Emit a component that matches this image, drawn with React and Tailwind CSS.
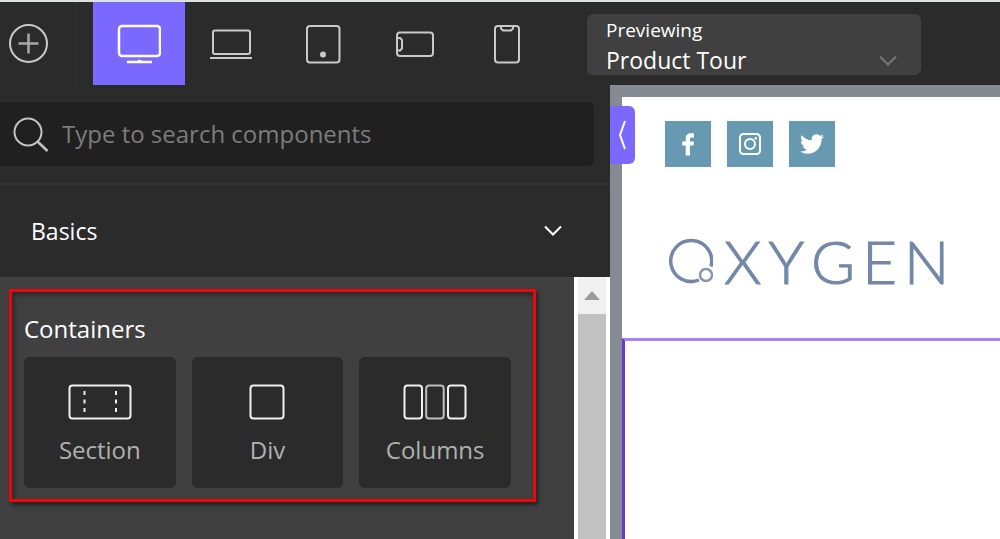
import { useState } from "react";

const devices = [
  { id: "desktop", label: "Desktop", Icon: DesktopIcon },
  { id: "laptop", label: "Laptop", Icon: LaptopIcon },
  { id: "tablet", label: "Tablet", Icon: TabletIcon },
  { id: "landscape", label: "Phone landscape", Icon: LandscapeIcon },
  { id: "phone", label: "Phone portrait", Icon: PhoneIcon },
];

const containers = [
  { name: "Section", Icon: SectionIcon },
  { name: "Div", Icon: DivIcon },
  { name: "Columns", Icon: ColumnsIcon },
];

const socials = [
  { name: "Facebook", Icon: FacebookIcon },
  { name: "Instagram", Icon: InstagramIcon },
  { name: "Twitter", Icon: TwitterIcon },
];

function Svg({ w = 44, h = 44, children, className = "" }) {
  return (
    <svg width={w} height={h} viewBox={`0 0 ${w} ${h}`} fill="none" stroke="currentColor"
      strokeWidth="2" aria-hidden="true" className={className}>
      {children}
    </svg>
  );
}

function DesktopIcon() {
  return (
    <Svg>
      <rect x="2" y="4" width="41" height="30" rx="3" strokeWidth="2.500" />
      <path d="M10 40h25" strokeWidth="2.500" />
      <path d="M19 39.500l3.500-2 3.500 2z" fill="currentColor" stroke="none" />
    </Svg>
  );
}

function LaptopIcon() {
  return (
    <Svg>
      <rect x="4" y="8.500" width="37" height="23.500" rx="2" />
      <path d="M1 36h42" />
    </Svg>
  );
}

function TabletIcon() {
  return (
    <Svg>
      <rect x="6" y="4" width="32.500" height="36.500" rx="3" />
      <circle cx="22" cy="32.500" r="3" fill="currentColor" stroke="none" />
    </Svg>
  );
}

function LandscapeIcon() {
  return (
    <Svg>
      <rect x="4" y="10.500" width="36" height="23.500" rx="3" />
      <path d="M4 16h3l2 2v8.500l-2 2H4" />
    </Svg>
  );
}

function PhoneIcon() {
  return (
    <Svg>
      <rect x="10" y="4" width="24" height="36.500" rx="3" />
      <path d="M16 4v2.500l2 2h8l2-2V4" />
    </Svg>
  );
}

function SectionIcon() {
  return (
    <Svg w={64} h={36}>
      <rect x="1.500" y="1.500" width="61" height="33" rx="3" />
      <path d="M16.500 7v24M48 7v24" strokeDasharray="4 4.500" />
    </Svg>
  );
}

function DivIcon() {
  return (
    <Svg w={36} h={36}>
      <rect x="1.500" y="1.500" width="33" height="33" rx="3" />
    </Svg>
  );
}

function ColumnsIcon() {
  return (
    <Svg w={64} h={36}>
      <rect x="1.500" y="1.500" width="17.500" height="33" rx="3" />
      <rect x="23.200" y="1.500" width="17.500" height="33" rx="3" opacity="0.75" />
      <rect x="45" y="1.500" width="17.500" height="33" rx="3" />
    </Svg>
  );
}

function FacebookIcon() {
  return (
    <svg width="24" height="24" viewBox="0 0 24 24" fill="currentColor" aria-hidden="true">
      <path d="M18 1.500v4h-2.300c-1.400 0-1.700.7-1.700 1.800V9.500h4l-.6 4H14V23.500H9.700V13.500H6.200v-4h3.500V6.400C9.700 3 11.800 1.200 14.900 1.200c1.400 0 2.700.1 3.100.3z" />
    </svg>
  );
}

function InstagramIcon() {
  return (
    <svg width="24" height="24" viewBox="0 0 24 24" fill="none" stroke="currentColor"
      strokeWidth="2" aria-hidden="true">
      <rect x="2" y="2" width="20" height="20" rx="3.500" />
      <circle cx="12" cy="12" r="5" />
      <circle cx="17.800" cy="6.200" r="1.300" fill="currentColor" stroke="none" />
    </svg>
  );
}

function TwitterIcon() {
  return (
    <svg width="24" height="24" viewBox="0 0 24 24" fill="currentColor" aria-hidden="true">
      <path d="M23.950 4.570a10 10 0 0 1-2.820.77 4.960 4.960 0 0 0 2.160-2.720c-.95.550-2 .95-3.130 1.180a4.920 4.920 0 0 0-8.380 4.480C7.690 8.100 4.070 6.130 1.640 3.160a4.820 4.820 0 0 0-.67 2.480c0 1.710.87 3.210 2.190 4.100a4.900 4.900 0 0 1-2.230-.62v.06a4.920 4.920 0 0 0 3.950 4.830 5 5 0 0 1-2.210.08 4.940 4.940 0 0 0 4.600 3.420A9.870 9.870 0 0 1 0 19.540a13.990 13.990 0 0 0 7.550 2.210c9.050 0 14-7.500 14-13.980 0-.21 0-.42-.02-.63a9.940 9.940 0 0 0 2.460-2.550z" />
    </svg>
  );
}

function Toolbar() {
  const [device, setDevice] = useState("desktop");

  return (
    <header className="flex items-stretch h-[85px] shrink-0 border-t-2 border-[#dde1e2] bg-[#2b2b2b] text-[#c9c9c9]">
      <button aria-label="Add" className="w-[77px] pl-2 border-r border-[#353535]">
        <Svg w={42} h={42}>
          <circle cx="20.500" cy="20.500" r="18.500" />
          <path d="M20.500 10.500v20M10.500 20.500h20" strokeWidth="2.500" stroke="#a8a8a8" />
        </Svg>
      </button>

      <div className="flex ml-4">
        {devices.map(({ id, label, Icon }) => (
          <button
            key={id}
            aria-label={label}
            aria-pressed={device === id}
            onClick={() => setDevice(id)}
            className={`w-[92px] flex items-center justify-center
              ${device === id ? "bg-[#7b68ff] text-white" : "hover:text-white"}`}
          >
            <Icon />
          </button>
        ))}
      </div>

      <div className="relative self-start mt-3 ml-[34px] w-[334px] h-[61px] rounded-md bg-[#404040] text-white">
        <label htmlFor="preview" className="block pl-[19px] pt-1 text-[19px] leading-6">Previewing</label>
        <select id="preview"
          className="block w-full h-9 pl-[19px] pr-12 bg-transparent appearance-none outline-none text-[23px] leading-9">
          <option>Product Tour</option>
        </select>
        <Svg w={18} h={12} className="absolute right-6 bottom-2 pointer-events-none text-[#757575]">
          <path d="M1 1.500l8 8 8-8" />
        </Svg>
      </div>
    </header>
  );
}

function Sidebar() {
  const [search, setSearch] = useState("");
  const [open, setOpen] = useState(true);

  return (
    <aside className="w-[61%] shrink-0 flex flex-col bg-[#2b2b2b]">
      {/* Search */}
      <div className="flex items-center my-[17px] mr-4 h-16 pl-3 rounded-r-md bg-[#202020]">
        <Svg w={38} h={38} className="text-[#c4c4c4] shrink-0">
          <circle cx="16" cy="17" r="13.500" />
          <path d="M25.500 26.500l10 9.500" strokeWidth="2.500" />
        </Svg>
        <input
          value={search}
          onChange={(e) => setSearch(e.target.value)}
          aria-label="Search components"
          placeholder="Type to search components"
          className="flex-1 min-w-0 ml-3 bg-transparent outline-none text-2xl text-white placeholder-[#7c7c7c]"
        />
      </div>

      <button
        onClick={() => setOpen(!open)}
        aria-expanded={open}
        className="flex items-center justify-between h-[94px] shrink-0 pl-[31px] pr-12 border-t-2 border-[#323232] text-white text-[23px]"
      >
        Basics
        <Svg w={18} h={12}>
          <path d="M1 1.500l8 8 8-8" />
        </Svg>
      </button>

      {open && (
        <div className="flex flex-1 min-h-0 bg-[#404040]">
          <div className="flex-1 min-w-0 pl-[9px] pt-3 pr-[38px]">
            <section className="h-[213px] px-3 pt-[21px] border-3 border-[#e8090d] shadow-[2px_3px_4px_rgba(0,0,0,0.5),inset_2px_3px_4px_rgba(0,0,0,0.4)]">
              <h2 className="text-white text-2xl leading-8">Containers</h2>
              <div className="grid grid-cols-3 gap-4 mt-3 mr-[10px]">
                {containers.map(({ name, Icon }) => (
                  <button key={name}
                    className="h-[131px] pt-1 flex flex-col items-center justify-center gap-[14px] rounded-md bg-[#2b2b2b] text-[#f0f0f0] hover:bg-[#333]">
                    <Icon />
                    <span className="text-2xl leading-8 text-[#b0b0b0]">{name}</span>
                  </button>
                ))}
              </div>
            </section>
          </div>

          {/* Scrollbar */}
          <div className="w-9 flex flex-col bg-[#f1f1f1] border-x-4 border-white">
            <button aria-label="Scroll up" className="h-[37px] flex items-center justify-center text-[#9b9b9b]">
              <svg width="16" height="9" viewBox="0 0 16 9" fill="currentColor" aria-hidden="true">
                <path d="M0 9l8-9 8 9z" />
              </svg>
            </button>
            <div className="flex-1 bg-[#c1c1c1]" />
          </div>
        </div>
      )}
    </aside>
  );
}

function Logo() {
  return (
    <a href="#home" aria-label="Oxygen" className="flex items-center w-fit gap-[11px] text-[#7388a8]">
      <svg width="48" height="48" viewBox="0 0 48 48" fill="none" stroke="currentColor" aria-hidden="true">
        <path d="M46 29.500A20.500 20.500 0 1 0 34 43" strokeWidth="3.500" />
        <circle cx="41" cy="38" r="6" strokeWidth="2.500" stroke="#8a96a8" />
      </svg>
      <span className="flex gap-[7px] font-[Lato] font-light text-6xl leading-[60px] [-webkit-text-stroke:1px]">
        {[..."XYGEN"].map((letter) => <span key={letter}>{letter}</span>)}
      </span>
    </a>
  );
}

function Preview() {
  return (
    <main className="relative flex-1 min-w-0 flex flex-col border-t-12 border-l-12 border-[#858b93] bg-white">
      <div className="pl-[43px] pt-6 h-[241px]">
        <div className="flex gap-4">
          {socials.map(({ name, Icon }) => (
            <a key={name} href={`#${name.toLowerCase()}`} aria-label={name}
              className="w-[46px] h-[46px] flex items-center justify-center bg-[#6799b2] text-white">
              <Icon />
            </a>
          ))}
        </div>
        <div className="mt-16">
          <Logo />
        </div>
      </div>
      <div className="flex-1 border-t-3 border-l-3 border-t-[#a582f2] border-l-[#6a35d4]" />

      {/* Collapse handle */}
      <button aria-label="Collapse panel"
        className="absolute -left-3 top-[9px] w-[25px] h-[58px] flex items-center justify-center rounded-r-md bg-[#7b68ff] text-white">
        <Svg w={10} h={30}>
          <path d="M7 1L2 15l5 14" />
        </Svg>
      </button>
    </main>
  );
}

export default function App() {
  return (
    <div className="h-screen flex flex-col overflow-hidden bg-[#2b2b2b] font-['Open_Sans',sans-serif]">
      <Toolbar />
      <div className="flex flex-1 min-h-0">
        <Sidebar />
        <Preview />
      </div>
    </div>
  );
}
